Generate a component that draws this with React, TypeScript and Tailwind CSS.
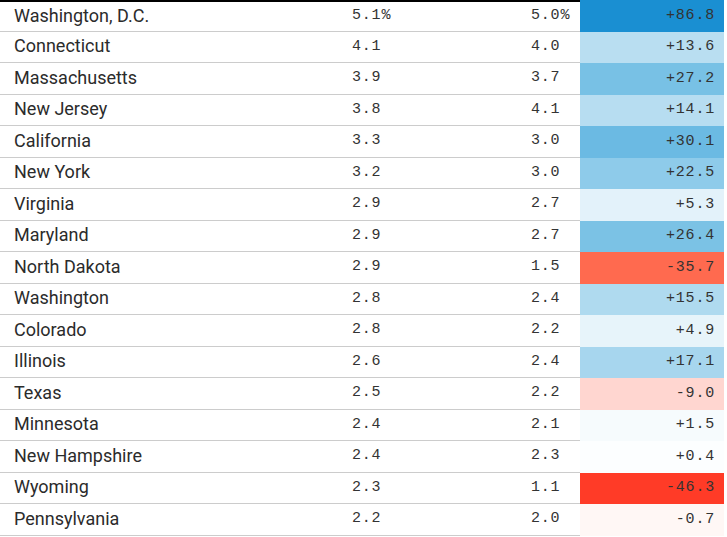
import React from "react";

type Row = { name: string; a: string; b: string; d: string; bg: string };

const rows: Row[] = [
  { name: "Washington, D.C.", a: "5.1%", b: "5.0%", d: "+86.8", bg: "bg-[#1a8fd2]" },
  { name: "Connecticut", a: "4.1", b: "4.0", d: "+13.6", bg: "bg-[#b9def1]" },
  { name: "Massachusetts", a: "3.9", b: "3.7", d: "+27.2", bg: "bg-[#78c1e5]" },
  { name: "New Jersey", a: "3.8", b: "4.1", d: "+14.1", bg: "bg-[#b7ddf1]" },
  { name: "California", a: "3.3", b: "3.0", d: "+30.1", bg: "bg-[#6bbae3]" },
  { name: "New York", a: "3.2", b: "3.0", d: "+22.5", bg: "bg-[#8ecbea]" },
  { name: "Virginia", a: "2.9", b: "2.7", d: "+5.3", bg: "bg-[#e3f2fa]" },
  { name: "Maryland", a: "2.9", b: "2.7", d: "+26.4", bg: "bg-[#7bc2e5]" },
  { name: "North Dakota", a: "2.9", b: "1.5", d: "-35.7", bg: "bg-[#ff6a4f]" },
  { name: "Washington", a: "2.8", b: "2.4", d: "+15.5", bg: "bg-[#afdaef]" },
  { name: "Colorado", a: "2.8", b: "2.2", d: "+4.9", bg: "bg-[#e7f4fa]" },
  { name: "Illinois", a: "2.6", b: "2.4", d: "+17.1", bg: "bg-[#a7d6ee]" },
  { name: "Texas", a: "2.5", b: "2.2", d: "-9.0", bg: "bg-[#ffd6d0]" },
  { name: "Minnesota", a: "2.4", b: "2.1", d: "+1.5", bg: "bg-[#f6fbfd]" },
  { name: "New Hampshire", a: "2.4", b: "2.3", d: "+0.4", bg: "bg-[#fcfeff]" },
  { name: "Wyoming", a: "2.3", b: "1.1", d: "-46.3", bg: "bg-[#ff3b27]" },
  { name: "Pennsylvania", a: "2.2", b: "2.0", d: "-0.7", bg: "bg-[#fff7f5]" },
];

const mono = "font-['Liberation_Mono',monospace] text-[15px] tracking-[0.8px] text-[#333]";

export default function App() {
  return (
    <div className="w-[727px] h-[537px] overflow-hidden bg-white">
      <div className="flex flex-col w-[724px]">
        {rows.map((r, i) => {
          const cellBorder =
            i === 0
              ? "border-t-2 border-b border-t-black border-b-[#cccccc]"
              : "border-b border-b-[#cccccc]";
          return (
            <div key={r.name} className="grid grid-cols-[340px_170px_70px_144px] h-[31.5px]">
              <div
                className={`${cellBorder} flex items-center pl-[14px] pb-[2px] font-['Roboto',sans-serif] text-[18px] text-[#2b2b2b]`}
              >
                {r.name}
              </div>
              <div className={`${cellBorder} flex items-center pl-[12px] ${mono}`}>{r.a}</div>
              <div className={`${cellBorder} flex items-center pl-[21px] ${mono}`}>{r.b}</div>
              <div className={`${r.bg} flex items-center justify-end pr-[9px] ${mono} text-[#222]`}>
                {r.d}
              </div>
            </div>
          );
        })}
      </div>
    </div>
  );
}
